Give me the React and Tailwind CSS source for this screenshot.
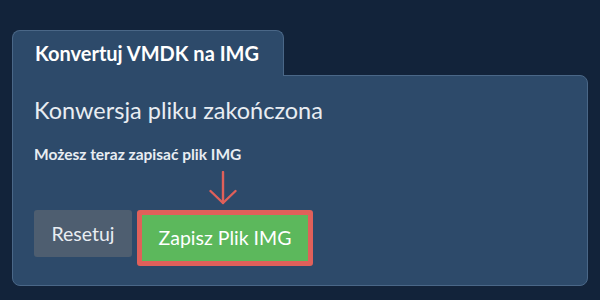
import React from 'react';

export default function App() {
  return (
    <div className="w-[600px] h-[300px] bg-[#12233a] pt-[30px] px-[12px] font-['Lato',sans-serif]">
      {/* Tab */}
      <div className="relative z-10 w-[272px] -mb-px bg-[#2d4a6a] border border-b-0 border-[#4a6787] rounded-t-lg px-[22px] pt-[10px] pb-[11px]">
        <h1 className="text-[20px] leading-[24px] font-bold text-white whitespace-nowrap">Konvertuj VMDK na IMG</h1>
      </div>

      {/* Panel */}
      <div className="w-[576px] h-[211px] bg-[#2d4a6a] border border-[#4a6787] rounded-b-lg rounded-tr-lg px-[21px] pt-[20px]">
        <h2 className="text-[23.5px] leading-[28px] font-normal text-[#e8edf2]">Konwersja pliku zakończona</h2>
        <p className="mt-[20px] text-[15.5px] leading-[20px] font-bold text-[#e8edf2]">Możesz teraz zapisać plik IMG</p>

        <div className="flex justify-start pl-[175px] mt-[7px] h-[34px]">
          <svg width="28" height="34" viewBox="0 0 28 34" fill="none" stroke="#e0605a" strokeWidth="2.4" strokeLinecap="round" strokeLinejoin="round">
            <path d="M14 1 V32" />
            <path d="M1.5 20 L14 32 L26.5 20" />
          </svg>
        </div>

        <div className="flex items-start gap-[5px] mt-[5px]">
          <button className="h-[47px] w-[98px] bg-[#4e5e70] rounded-[3px] text-[19.5px] text-[#e8edf2]">Resetuj</button>
          <div className="border-[5px] border-[#e0605a] rounded-[3px]">
            <button className="h-[46px] w-[166px] bg-[#5cb85c] text-[19.5px] text-white">Zapisz Plik IMG</button>
          </div>
        </div>
      </div>
    </div>
  );
}
